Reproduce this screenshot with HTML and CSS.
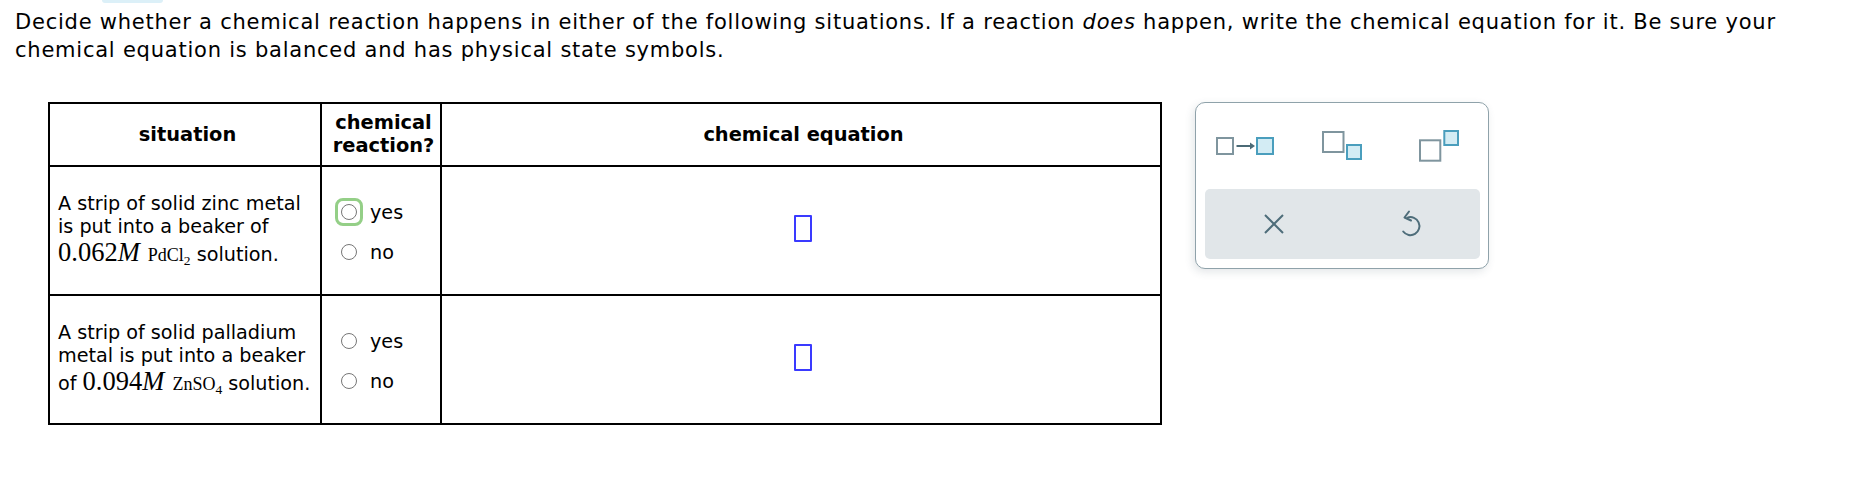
FILE: index.html
```html
<!DOCTYPE html>
<html>
<head>
<meta charset="utf-8">
<link rel="stylesheet" href="styles.css">
</head>
<body>
<div class="tab"></div>
<p class="intro">Decide whether a chemical reaction happens in either of the following situations. If a reaction <i>does</i> happen, write the chemical equation for it. Be sure your<br>chemical equation is balanced and has physical state symbols.</p>
<div class="work">
  <div class="grid">
    <div class="cell head">situation</div>
    <div class="cell head">chemical<br>reaction?</div>
    <div class="cell head last">chemical equation</div>

    <div class="cell text">A strip of solid zinc metal is put into a beaker of <span class="num">0.062<i>M</i></span> <span class="chem">PdCl<span class="sub">2</span></span> solution.</div>
    <div class="cell choices">
      <div class="opt"><span class="ring"><span class="radio"></span></span><span>yes</span></div>
      <div class="opt"><span class="radio"></span><span>no</span></div>
    </div>
    <div class="cell eq last"><span class="slot"></span></div>

    <div class="cell text">A strip of solid palladium metal is put into a beaker of <span class="num">0.094<i>M</i></span> <span class="chem">ZnSO<span class="sub">4</span></span> solution.</div>
    <div class="cell choices">
      <div class="opt"><span class="radio"></span><span>yes</span></div>
      <div class="opt"><span class="radio"></span><span>no</span></div>
    </div>
    <div class="cell eq last"><span class="slot"></span></div>
  </div>

  <div class="panel">
    <div class="tools">
      <span class="tool">
        <svg width="58" height="18" viewBox="0 0 58 18">
          <rect x="1" y="1" width="16" height="16" fill="#fff" stroke="#7f959e" stroke-width="2"/>
          <line x1="20.5" y1="9" x2="35" y2="9" stroke="#4b6a76" stroke-width="2"/>
          <path d="M34 5.5 L39 9 L34 12.5 Z" fill="#4b6a76"/>
          <rect x="41" y="1" width="16" height="16" fill="#d3ecf4" stroke="#4a9ebd" stroke-width="2"/>
        </svg>
      </span>
      <span class="tool">
        <svg width="40" height="29" viewBox="0 0 40 29">
          <rect x="1" y="1" width="20.5" height="20" fill="#fff" stroke="#7f959e" stroke-width="2"/>
          <rect x="25" y="14" width="14" height="14" fill="#d3ecf4" stroke="#4a9ebd" stroke-width="2"/>
        </svg>
      </span>
      <span class="tool">
        <svg width="40" height="32" viewBox="0 0 40 32">
          <rect x="1" y="10.3" width="20.3" height="20.4" fill="#fff" stroke="#7f959e" stroke-width="2"/>
          <rect x="25.3" y="1" width="13.7" height="14" fill="#d3ecf4" stroke="#4a9ebd" stroke-width="2"/>
        </svg>
      </span>
    </div>
    <div class="actions">
      <span class="act">
        <svg width="20" height="20" viewBox="0 0 20 20">
          <path d="M1 1 L19 19 M19 1 L1 19" stroke="#4e6d7a" stroke-width="2" fill="none"/>
        </svg>
      </span>
      <span class="act">
        <svg width="22" height="27" viewBox="0 0 22 27">
          <path d="M7.5 7.6 A9 9 0 1 1 3.2 21.5" stroke="#4e6d7a" stroke-width="2" fill="none" stroke-linecap="round"/>
          <path d="M9 1.5 L4.5 7.5 L11 10.5" stroke="#4e6d7a" stroke-width="2" fill="none" stroke-linecap="round" stroke-linejoin="round"/>
        </svg>
      </span>
    </div>
  </div>
</div>
</body>
</html>
```

FILE: styles.css
```css
html, body {
  margin: 0;
  padding: 0;
  background: #fff;
}

body {
  font-family: "DejaVu Sans", Verdana, sans-serif;
  color: #000;
}

.tab {
  width: 61px;
  height: 3px;
  margin-left: 102px;
  background: #dcf0f8;
  border-radius: 0 0 10px 10px;
}

.intro {
  margin: 5px 0 0 15px;
  font-size: 21px;
  line-height: 28.4px;
  letter-spacing: 0.77px;
  white-space: nowrap;
}

.work {
  display: flex;
  align-items: flex-start;
  gap: 33px;
  margin-top: 37px;
  padding-left: 48px;
}

.grid {
  display: grid;
  grid-template-columns: 272px 120px 720px;
  grid-template-rows: 63px 129px 129px;
  border-top: 2px solid #000;
  border-left: 2px solid #000;
  font-size: 19.2px;
  line-height: 23.3px;
}

.cell {
  box-sizing: border-box;
  border-right: 2px solid #000;
  border-bottom: 2px solid #000;
  display: flex;
  align-items: center;
}

.head {
  justify-content: center;
  text-align: center;
  font-weight: bold;
  font-size: 19.4px;
  padding-left: 5px;
}

.text {
  display: block;
  padding: 25px 2px 0 8px;
}

.num {
  font-family: "Liberation Serif", "Times New Roman", serif;
  font-size: 26.5px;
  line-height: 28px;
}

.chem {
  font-family: "Liberation Serif", "Times New Roman", serif;
  font-size: 18px;
  margin-left: 2px;
}

.sub {
  font-size: 13.5px;
  vertical-align: -4px;
  line-height: 0;
}

.choices {
  flex-direction: column;
  align-items: flex-start;
  justify-content: center;
  gap: 17px;
  padding: 4px 0 0 19px;
}

.opt {
  display: flex;
  align-items: center;
  gap: 13px;
  height: 23px;
}

.radio {
  display: block;
  box-sizing: border-box;
  width: 16px;
  height: 16px;
  border: 1.5px solid #767676;
  border-radius: 50%;
  background: #fff;
}

.ring {
  display: block;
  border: 3px solid #94cf87;
  border-radius: 8px;
  padding: 3px;
  margin: -6px;
}

.eq {
  justify-content: center;
  padding-left: 4px;
}

.slot {
  display: block;
  box-sizing: border-box;
  width: 18px;
  height: 27px;
  border: 2px solid #3a3aff;
  border-radius: 1px;
  margin-top: -3px;
}

.panel {
  box-sizing: border-box;
  width: 294px;
  height: 167px;
  border: 1px solid #8fa2aa;
  border-radius: 10px;
  background: #fff;
  box-shadow: -2px 3px 8px rgba(60, 80, 90, 0.14);
  display: flex;
  flex-direction: column;
}

.tools {
  display: grid;
  grid-template-columns: 1fr 1fr 1fr;
  align-items: center;
  justify-items: center;
  height: 86px;
}

.tool svg,
.act svg {
  display: block;
}

.actions {
  display: grid;
  grid-template-columns: 1fr 1fr;
  align-items: center;
  justify-items: center;
  height: 70px;
  margin: 0 8px 0 9px;
  background: #e1e6e9;
  border-radius: 5px;
}
```
